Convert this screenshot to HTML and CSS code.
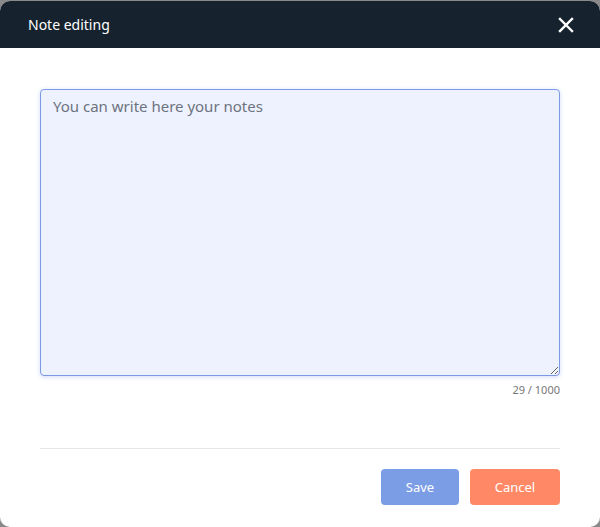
FILE: index.html
```html
<!DOCTYPE html>
<html lang="en">
<head>
<meta charset="utf-8">
<title>Note editing</title>
<link rel="stylesheet" href="styles.css">
</head>
<body>
<div class="modal">
  <header class="modal-header">
    <h1 class="modal-title">Note editing</h1>
    <button class="close-btn" aria-label="Close">
      <svg width="16" height="16" viewBox="0 0 16 16"><path d="M2 2L14 14M14 2L2 14" stroke="#fff" stroke-width="2.4" stroke-linecap="square"/></svg>
    </button>
  </header>
  <main class="modal-body">
    <textarea class="note-input" maxlength="1000">You can write here your notes</textarea>
    <div class="counter">29 / 1000</div>
  </main>
  <footer class="modal-footer">
    <button class="btn btn-save">Save</button>
    <button class="btn btn-cancel">Cancel</button>
  </footer>
</div>
</body>
</html>
```
FILE: styles.css
```css
* { box-sizing: border-box; }
html, body { margin: 0; height: 100%; }
body {
  background: #8a8a8a;
  font-family: "Noto Sans", "Open Sans", sans-serif;
  padding-top: 1px;
  overflow: hidden;
}
.modal {
  background: #fff;
  height: 526px;
  border-radius: 10px;
  overflow: hidden;
  display: flex;
  flex-direction: column;
}
.modal-header {
  background: #16232e;
  height: 47px;
  display: flex;
  align-items: center;
  justify-content: space-between;
  padding: 0 26px 0 28px;
}
.modal-title {
  margin: 0;
  color: #fff;
  font-size: 14px;
  font-weight: 400;
}
.close-btn {
  background: none;
  border: 0;
  padding: 0;
  display: flex;
  cursor: pointer;
}
.modal-body {
  padding: 41px 40px 0;
  display: flex;
  flex-direction: column;
}
.note-input {
  height: 287px;
  width: 100%;
  resize: vertical;
  background: #edf2fe;
  border: 1px solid #7c9ae4;
  border-radius: 4px;
  box-shadow: 0 1px 4px rgba(124, 154, 228, 0.35);
  padding: 6px 12px;
  font-family: "Noto Sans", "Open Sans", sans-serif;
  font-size: 15px;
  line-height: 20px;
  color: #6d7380;
  outline: none;
}
.counter {
  text-align: right;
  font-size: 11px;
  color: #777;
  margin-top: 6px;
  line-height: 16px;
}
.modal-footer {
  margin: auto 40px 0;
  border-top: 1px solid #e6e6e6;
  padding: 20px 0 22px;
  display: flex;
  justify-content: flex-end;
  gap: 11px;
}
.btn {
  height: 36px;
  border: 0;
  border-radius: 4px;
  color: #fff;
  font-family: "Noto Sans", "Open Sans", sans-serif;
  font-size: 13px;
  cursor: pointer;
}
.btn-save { width: 78px; background: #7b9de6; }
.btn-cancel { width: 90px; background: #ff8966; }
```
